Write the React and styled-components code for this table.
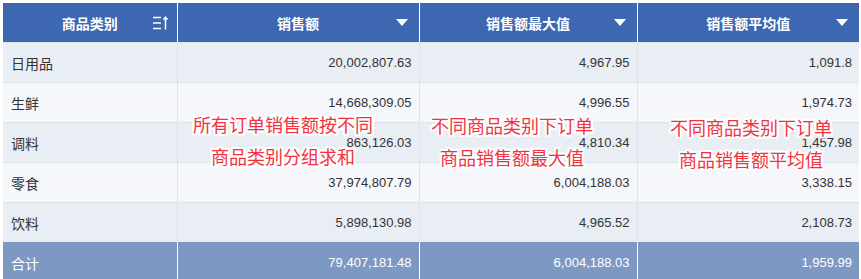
import React from 'react';
import styled, { createGlobalStyle } from 'styled-components';

const GlobalStyle = createGlobalStyle`
  body {
    margin: 0;
    background: #ffffff;
    font-family: "Noto Sans CJK SC", "Noto Sans", sans-serif;
  }
`;

const color = {
  header: '#3e67b2',
  rowDark: '#e9edf4',
  rowLight: '#f5f7fb',
  total: '#7e98c4',
  text: '#333333',
  line: '#dde3ec',
  note: '#f2323f',
};

const Page = styled.div`
  position: relative;
  padding: 3px 2px 0 3px;
  width: 856px;
`;

const Table = styled.table`
  width: 856px;
  border-collapse: collapse;
  table-layout: fixed;
`;

const HeadCell = styled.th`
  position: relative;
  height: 39px;
  padding: 0;
  background: ${color.header};
  color: #ffffff;
  font-size: 14px;
  font-weight: 700;
  text-align: center;
  border-left: 1px solid #ffffff;
  &:first-child {
    border-left: none;
  }
`;

const HeadIcon = styled.span`
  position: absolute;
  right: ${(p) => p.$right}px;
  top: 50%;
  transform: translateY(-50%);
  display: flex;
`;

const Row = styled.tr`
  background: ${(p) => (p.$total ? color.total : p.$odd ? color.rowLight : color.rowDark)};
  color: ${(p) => (p.$total ? '#ffffff' : color.text)};
  border-top: 1px solid ${(p) => (p.$total ? color.total : color.line)};
`;

const Cell = styled.td`
  height: 39px;
  padding: 0 ${(p) => (p.$num ? 7 : 8)}px;
  font-family: ${(p) => (p.$num ? '"Liberation Sans", sans-serif' : '"Noto Sans CJK SC", sans-serif')};
  font-size: ${(p) => (p.$num ? 13 : 14)}px;
  text-align: ${(p) => (p.$num ? 'right' : 'left')};
  border-left: 1px solid ${(p) => (p.$total ? '#ffffff' : color.line)};
  &:first-child {
    border-left: none;
  }
`;

const Note = styled.div`
  position: absolute;
  left: ${(p) => p.$x}px;
  top: ${(p) => p.$y}px;
  transform: translateX(-50%);
  color: ${color.note};
  font-family: "Noto Sans CJK SC", sans-serif;
  font-size: 18px;
  line-height: 32px;
  text-align: center;
  white-space: nowrap;
  text-shadow:
    2px 0 0 #fff, -2px 0 0 #fff, 0 2px 0 #fff, 0 -2px 0 #fff,
    2px 2px 0 #fff, -2px -2px 0 #fff, 2px -2px 0 #fff, -2px 2px 0 #fff;
`;

const SortIcon = () => (
  <svg width="18" height="17" viewBox="0 0 18 17">
    <g stroke="#ffffff" strokeWidth="1.6" fill="none">
      <line x1="1" y1="3" x2="9" y2="3" />
      <line x1="1" y1="8.5" x2="9" y2="8.5" />
      <line x1="1" y1="14" x2="9" y2="14" />
      <line x1="13.5" y1="3" x2="13.5" y2="15" />
    </g>
    <path d="M10.5 5 L13.5 1.5 L16.5 5 Z" fill="#ffffff" />
  </svg>
);

const Caret = () => (
  <svg width="12" height="8" viewBox="0 0 12 8">
    <path d="M0 0 H12 L6 7 Z" fill="#ffffff" />
  </svg>
);

const rows = [
  ['日用品', '20,002,807.63', '4,967.95', '1,091.8'],
  ['生鲜', '14,668,309.05', '4,996.55', '1,974.73'],
  ['调料', '863,126.03', '4,810.34', '1,457.98'],
  ['零食', '37,974,807.79', '6,004,188.03', '3,338.15'],
  ['饮料', '5,898,130.98', '4,965.52', '2,108.73'],
];

const total = ['合计', '79,407,181.48', '6,004,188.03', '1,959.99'];

const notes = [
  { x: 283, y: 108, lines: ['所有订单销售额按不同', '商品类别分组求和'] },
  { x: 512, y: 109, lines: ['不同商品类别下订单', '商品销售额最大值'] },
  { x: 751, y: 111, lines: ['不同商品类别下订单', '商品销售额平均值'] },
];

const App = () => {
  return (
    <Page>
      <GlobalStyle />
      <Table>
        <colgroup>
          <col style={{ width: 174 }} />
          <col style={{ width: 242 }} />
          <col style={{ width: 218 }} />
          <col style={{ width: 222 }} />
        </colgroup>
        <thead>
          <tr>
            <HeadCell>
              商品类别
              <HeadIcon $right={7}><SortIcon /></HeadIcon>
            </HeadCell>
            {['销售额', '销售额最大值', '销售额平均值'].map((title, index) => (
              <HeadCell key={index}>
                {title}
                <HeadIcon $right={11}><Caret /></HeadIcon>
              </HeadCell>
            ))}
          </tr>
        </thead>
        <tbody>
          {rows.map((row, index) => (
            <Row key={index} $odd={index % 2 === 1}>
              {row.map((value, i) => (
                <Cell key={i} $num={i > 0}>{value}</Cell>
              ))}
            </Row>
          ))}
          <Row $total>
            {total.map((value, i) => (
              <Cell key={i} $num={i > 0} $total>{value}</Cell>
            ))}
          </Row>
        </tbody>
      </Table>
      {notes.map((note, index) => (
        <Note key={index} $x={note.x} $y={note.y}>
          {note.lines.map((line, i) => (
            <div key={i}>{line}</div>
          ))}
        </Note>
      ))}
    </Page>
  );
};

export default App;
